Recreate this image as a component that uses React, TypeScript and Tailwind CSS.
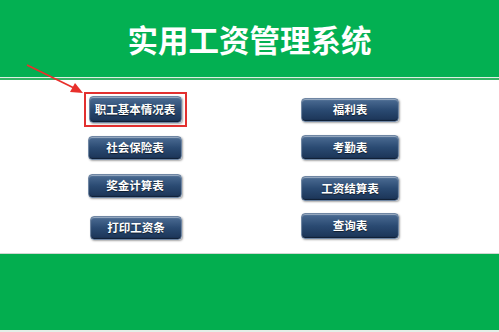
import React from "react";

const btn =
  "flex items-center justify-center rounded-[4px] border border-[#6f86a3] bg-gradient-to-b from-[#4d6d94] via-[#2a4a72] to-[#1b3456] text-white font-bold text-[11.5px] leading-none shadow-[inset_0_1px_1px_rgba(255,255,255,0.45),inset_0_-1px_1px_rgba(0,0,0,0.4),1px_1px_2px_rgba(0,0,0,0.35)] [text-shadow:0_1px_1px_rgba(0,0,0,0.6)]";

export default function App() {
  return (
    <div
      className="relative w-[499px] h-[332px] bg-white overflow-hidden flex flex-col"
      style={{ fontFamily: '"Noto Sans CJK SC", "Noto Sans", sans-serif' }}
    >
      <div className="h-[77px] bg-[#03b052] flex items-center justify-center">
        <h1 className="text-white font-bold text-[30.5px] leading-none tracking-[0px] pt-[1px]">
          实用工资管理系统
        </h1>
      </div>
      <div className="h-px bg-[#dcefe2]" />
      <div className="h-[2px] bg-[#34b565]" />

      <div className="h-[173px] flex">
        <div className="w-[271px] flex flex-col items-center pt-[12px] pr-[1px]">
          <div className="border-2 border-[#e2302f] w-[103px] h-[35px] flex items-center justify-center">
            <div className={`${btn} w-[93px] h-[27px]`}>职工基本情况表</div>
          </div>
          <div className={`${btn} w-[94px] h-[24px] mt-[9px]`}>社会保险表</div>
          <div className={`${btn} w-[94px] h-[24px] mt-[14px]`}>奖金计算表</div>
          <div className={`${btn} w-[92px] h-[24px] mt-[18px] ml-[2px]`}>打印工资条</div>
        </div>
        <div className="flex flex-col pt-[18px] pl-[30px]">
          <div className={`${btn} w-[98px] h-[24px]`}>福利表</div>
          <div className={`${btn} w-[98px] h-[25px] mt-[13px]`}>考勤表</div>
          <div className={`${btn} w-[98px] h-[25px] mt-[16px]`}>工资结算表</div>
          <div className={`${btn} w-[98px] h-[26px] mt-[12px]`}>查询表</div>
        </div>
      </div>

      <div className="h-px bg-[#cfd8d2]" />
      <div className="h-[76px] bg-[#03ae4f]" />
      <div className="flex-1 bg-[#e4efe8]" />

      <svg
        className="absolute left-0 top-0 pointer-events-none"
        width="499"
        height="332"
        viewBox="0 0 499 332"
      >
        <line x1="27" y1="65" x2="74" y2="88" stroke="#e8302c" strokeWidth="1.8" />
        <polygon points="83,93 70,92 75,83" fill="#e8302c" />
      </svg>
    </div>
  );
}
